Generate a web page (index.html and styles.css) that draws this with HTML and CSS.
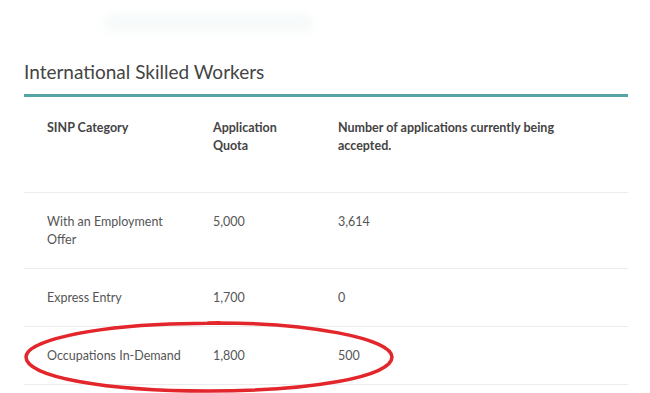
FILE: index.html
```html
<!DOCTYPE html>
<html>
<head>
<meta charset="utf-8">
<link rel="stylesheet" href="styles.css">
</head>
<body>
<div class="page">
  <div class="smudge"></div>
  <h2 class="title">International Skilled Workers</h2>
  <div class="table-wrap">
    <table class="quota">
      <colgroup>
        <col class="c1">
        <col class="c2">
        <col class="c3">
      </colgroup>
      <thead>
        <tr>
          <th>SINP Category</th>
          <th>Application Quota</th>
          <th>Number of applications currently being accepted.</th>
        </tr>
      </thead>
      <tbody>
        <tr>
          <td>With an Employment Offer</td>
          <td>5,000</td>
          <td>3,614</td>
        </tr>
        <tr>
          <td>Express Entry</td>
          <td>1,700</td>
          <td>0</td>
        </tr>
        <tr>
          <td class="nowrap">Occupations In-Demand</td>
          <td>1,800</td>
          <td>500</td>
        </tr>
      </tbody>
    </table>
    <svg class="circle" width="380" height="80" viewBox="0 0 380 80">
      <path d="M188 4 C290 3 372 20 372 38 C372 58 290 72 188 72 C86 72 6 58 6 38 C6 22 70 8 150 5 L200 4" fill="none" stroke="#e3262b" stroke-width="3.5" stroke-linecap="round"/>
    </svg>
  </div>
</div>
</body>
</html>
```
FILE: styles.css
```css
html, body {
  margin: 0;
  padding: 0;
  background: #ffffff;
}
.page {
  width: 650px;
  height: 393px;
  overflow: hidden;
  padding: 0 22px 0 24px;
  box-sizing: border-box;
  font-family: "Lato", "Open Sans", sans-serif;
  color: #555;
}
.smudge {
  width: 210px;
  height: 18px;
  margin: 14px 0 0 80px;
  background: #f7fafa;
  filter: blur(5px);
  border-radius: 8px;
}
.title {
  margin: 28px 0 0 0;
  font-size: 19px;
  font-weight: 400;
  color: #444;
  line-height: 23px;
  padding-bottom: 11px;
  border-bottom: 3px solid #56a5a5;
}
.table-wrap {
  position: relative;
}
.quota {
  width: 100%;
  table-layout: fixed;
  border-collapse: collapse;
  font-size: 12.5px;
  line-height: 18px;
}
.c1 { width: 166px; }
.c2 { width: 125px; }
.quota th {
  text-align: left;
  font-weight: 700;
  color: #444;
  vertical-align: top;
  padding: 22px 23px 37px 23px;
  border-bottom: 1px solid #ececec;
}
.quota td {
  vertical-align: top;
  padding: 20px 23px 19px 23px;
  border-bottom: 1px solid #ececec;
}
.quota td.nowrap {
  white-space: nowrap;
}
.circle {
  position: absolute;
  left: -4px;
  top: 222px;
}
```
